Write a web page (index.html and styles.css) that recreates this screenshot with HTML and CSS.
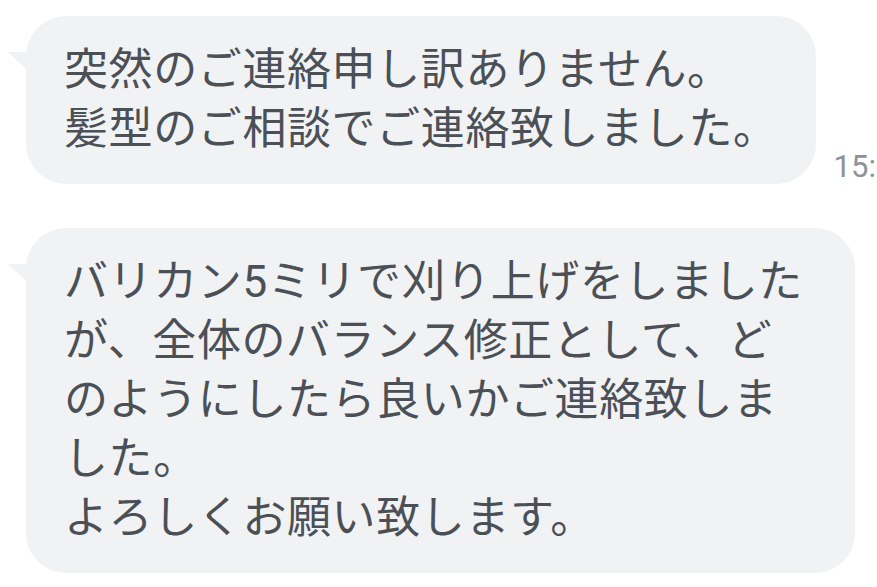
FILE: index.html
```html
<!DOCTYPE html>
<html lang="ja">
<head>
<meta charset="utf-8">
<link rel="stylesheet" href="styles.css">
</head>
<body>
<div class="chat">
  <div class="row">
    <div class="bubble">突然のご連絡申し訳ありません。<br>髪型のご相談でご連絡致しました。</div>
    <span class="time">15:</span>
  </div>
  <div class="row">
    <div class="bubble wide">バリカン5ミリで刈り上げをしました<br>が、全体のバランス修正として、ど<br>のようにしたら良いかご連絡致しま<br>した。<br>よろしくお願い致します。</div>
  </div>
</div>
</body>
</html>
```
FILE: styles.css
```css
html, body {
  margin: 0;
  padding: 0;
  background: #ffffff;
  overflow: hidden;
}
.chat {
  display: flex;
  flex-direction: column;
  gap: 44px;
  padding: 16px 0 0 26px;
  font-family: "Roboto", "Noto Sans CJK JP", sans-serif;
}
.row {
  display: flex;
  align-items: flex-end;
}
.bubble {
  position: relative;
  box-sizing: border-box;
  padding: 25px 38px;
  background: #f1f2f4;
  border-radius: 40px;
  color: #4b5057;
  font-size: 44px;
  line-height: 59px;
  letter-spacing: 0.6px;
  white-space: nowrap;
}
.wide {
  width: 829px;
}
.bubble::before {
  content: "";
  position: absolute;
  left: -18px;
  top: 36px;
  width: 0;
  height: 0;
  border-top: 18px solid #f1f2f4;
  border-left: 19px solid transparent;
}
.time {
  flex: none;
  margin: 0 0 2px 18px;
  color: #8e9399;
  font-size: 31px;
  line-height: 31px;
  white-space: nowrap;
}
```
